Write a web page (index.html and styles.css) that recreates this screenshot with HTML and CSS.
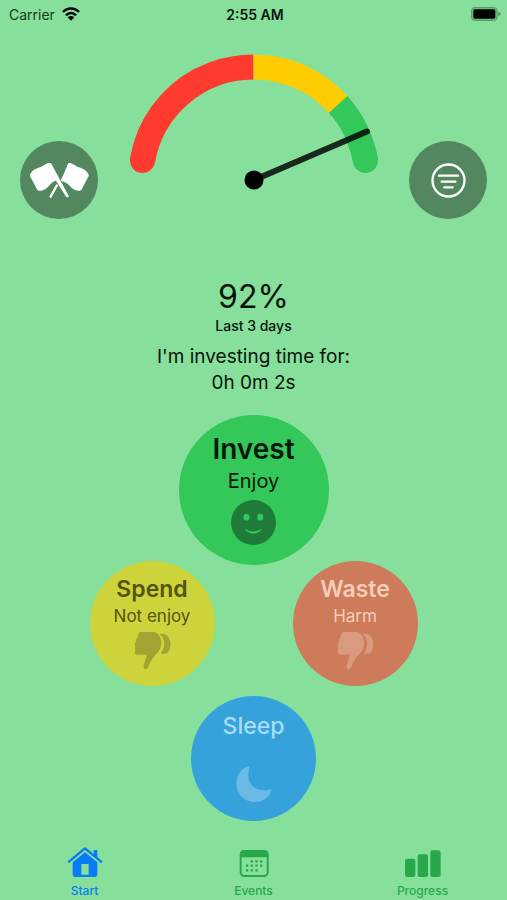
FILE: index.html
```html
<!DOCTYPE html>
<html lang="en">
<head>
<meta charset="utf-8">
<meta name="viewport" content="width=device-width, initial-scale=1">
<title>Start</title>
<link rel="stylesheet" href="styles.css">
</head>
<body>
<header class="status">
  <div class="status-left">
    <span>Carrier</span>
    <svg class="wifi" viewBox="0 0 54 42" aria-hidden="true">
      <g fill="none" stroke="currentColor" stroke-width="7.5">
        <path d="M3 15C16 1 38 1 51 15"/>
        <path d="M12 25C20 16 34 16 42 25"/>
      </g>
      <path d="M17 31Q27 23 37 31L27 41Z" fill="currentColor"/>
    </svg>
  </div>
  <time class="status-time">2:55 AM</time>
  <svg class="battery" viewBox="0 0 90 42" aria-hidden="true">
    <rect x="1.5" y="1.5" width="77" height="39" rx="10" fill="#6db87f" stroke="#58966a" stroke-width="3"/>
    <rect x="7" y="7" width="66" height="28" rx="5"/>
    <path d="M82 14Q90 17 90 21T82 28Z" fill="#58966a"/>
  </svg>
</header>

<main class="main">
  <section class="dial">
    <button class="round" type="button" aria-label="Goals">
      <svg class="flags" viewBox="55 90 190 115" aria-hidden="true">
        <g fill="none" stroke="#fff" stroke-width="7" stroke-linecap="round">
          <path d="M142 164L123 198"/>
        </g>
        <path fill="#fff" d="M178 96C188 94 194 103 207 108C218 113 230 114 238 131C240 136 236 140 233 145L217 176C214 181 208 180 202 179C190 177 184 168 174 159C168 154 160 154 155 150C154 147 156 143 158 140L173 105C174 101 175 98 178 96Z"/>
        <path fill="#fff" d="M121 96C111 94 105 103 93 108C81 113 69 114 61 131C59 136 63 140 66 145L82 176C85 181 91 180 97 179C109 177 115 168 124 159C130 154 135 151 139 150L170 198Q177 202 178 196L127 101Q125 97 121 96Z"/>
      </svg>
    </button>
    <svg class="gauge" viewBox="129 54 250 137" role="img" aria-label="92 percent">
      <g fill="none" stroke-width="25">
        <path stroke="#ff3b30" stroke-linecap="round" d="M142.500 160.500A113 113 0 0 1 200 80"/>
        <path stroke="#ff3b30" d="M142.500 160.500A113 113 0 0 1 253.500 67"/>
        <path stroke="#34c759" stroke-linecap="round" d="M365.500 160.500A113 113 0 0 0 358 136"/>
        <path stroke="#34c759" d="M365.500 160.500A113 113 0 0 0 338 104.400"/>
        <path stroke="#fc0" d="M253.500 67A113 113 0 0 1 338 104.400"/>
      </g>
      <path d="M254 180L367 131.500" stroke="#000" stroke-opacity=".82" stroke-width="6" stroke-linecap="round"/>
      <circle cx="254" cy="180" r="9.500"/>
    </svg>
    <button class="round" type="button" aria-label="Filter">
      <svg class="filter" viewBox="0 0 105 105" fill="none" stroke="#fff" aria-hidden="true">
        <circle cx="52.500" cy="52.500" r="48" stroke-width="7"/>
        <path stroke-width="7" stroke-linecap="round" d="M24 38H81M32 56H73M40 73H65"/>
      </svg>
    </button>
  </section>

  <section class="summary">
    <p class="percent">92%</p>
    <p class="period">Last 3 days</p>
    <p class="timer">I'm investing time for:<br>0h 0m 2s</p>
  </section>

  <section class="modes">
    <button class="mode invest" type="button">
      <span class="name">Invest</span>
      <span class="note">Enjoy</span>
      <svg class="face" viewBox="0 0 134 134" aria-hidden="true">
        <circle cx="67" cy="67" r="67" fill="#1f7c38"/>
        <g fill="#34c759"><ellipse cx="46" cy="51" rx="9" ry="10"/><ellipse cx="87" cy="51" rx="9" ry="10"/>
        <path d="M43 86Q67 101 90 86Q92 88 89 91Q67 110 44 91Q41 88 43 86Z"/></g>
      </svg>
    </button>
    <div class="pair">
      <button class="mode spend" type="button">
        <span class="name">Spend</span>
        <span class="note">Not enjoy</span>
        <svg class="thumb" viewBox="0 0 112 116" aria-hidden="true">
          <path d="M13 10Q13 3 22 2H58Q69 2 77 14Q84 25 82 41Q80 57 66 70Q57 79 50 92L43 109Q39 116 33 115Q28 113 29 105L39 71H13Q1 71 2 62L4 57Q0 52 4 44Q1 37 6 31Q4 24 9 20Z"/>
          <path d="M79 7H88Q100 8 107 23Q113 37 108 54Q104 66 94 68H84Q80 68 84 62Q94 46 91 31Q89 17 79 9Q77 7 79 7Z"/>
        </svg>
      </button>
      <button class="mode waste" type="button">
        <span class="name">Waste</span>
        <span class="note">Harm</span>
        <svg class="thumb" viewBox="0 0 112 116" aria-hidden="true">
          <path d="M13 10Q13 3 22 2H58Q69 2 77 14Q84 25 82 41Q80 57 66 70Q57 79 50 92L43 109Q39 116 33 115Q28 113 29 105L39 71H13Q1 71 2 62L4 57Q0 52 4 44Q1 37 6 31Q4 24 9 20Z"/>
          <path d="M79 7H88Q100 8 107 23Q113 37 108 54Q104 66 94 68H84Q80 68 84 62Q94 46 91 31Q89 17 79 9Q77 7 79 7Z"/>
        </svg>
      </button>
    </div>
    <button class="mode sleep" type="button">
      <span class="name">Sleep</span>
      <svg class="moon" viewBox="0 0 110 114" aria-hidden="true">
        <path d="M39 2Q41 2 41 5C35 27 37 46 48 60C61 76 81 79 105 74Q109 73 109 77C101 100 79 113 57 112C25 112 1 88 1 57C1 32 15 9 39 2Z"/>
      </svg>
    </button>
  </section>
</main>

<nav class="tabs" aria-label="Main">
  <a class="tab active" href="#start" aria-current="page">
    <svg class="tab-icon" viewBox="0 0 108 96" aria-hidden="true">
      <path fill="none" stroke="currentColor" stroke-width="7" stroke-linecap="round" stroke-linejoin="round" d="M6 47L54 7L102 47"/>
      <path fill="currentColor" fill-rule="evenodd" d="M54 19L91 49V83Q91 93 81 93H27Q17 93 17 83V49ZM43 54V86H65V54Z"/>
      <path fill="currentColor" d="M80 14Q80 12 82 12H89Q91 12 91 14V36L80 27Z"/>
    </svg>
    Start
  </a>
  <a class="tab" href="#events">
    <svg class="tab-icon" viewBox="0 0 108 96" aria-hidden="true">
      <rect x="14" y="15" width="81" height="75" rx="11" fill="none" stroke="currentColor" stroke-width="6"/>
      <path fill="currentColor" d="M12 34V25Q12 13 24 13H85Q97 13 97 25V34Z"/>
      <path stroke="currentColor" stroke-width="7" stroke-dasharray="7 7" d="M44 46H80M30 59H80M30 73H65"/>
    </svg>
    Events
  </a>
  <a class="tab" href="#progress">
    <svg class="tab-icon" viewBox="0 0 108 96" aria-hidden="true">
      <g fill="currentColor"><rect x="0" y="38" width="31" height="55" rx="7"/><rect x="38" y="25" width="31" height="68" rx="7"/><rect x="76" y="13" width="31" height="80" rx="7"/></g>
    </svg>
    Progress
  </a>
</nav>
</body>
</html>
```
FILE: styles.css
```css
* { box-sizing: border-box; }

body {
  display: flex;
  flex-direction: column;
  min-height: 100vh;
  margin: 0;
  background: #86df9b;
  color: #06140a;
  font-family: Inter, "Liberation Sans", sans-serif;
}

p { margin: 0; }
svg { display: block; flex: none; }

button {
  padding: 0;
  border: 0;
  color: inherit;
  font: inherit;
  cursor: pointer;
}

.status {
  display: grid;
  grid-template-columns: 1fr auto 1fr;
  align-items: center;
  height: 28px;
  padding: 0 6px 0 9px;
  font-size: 14px;
}
.status-left { display: flex; align-items: center; gap: 7px; color: #173820; }
.wifi { width: 18px; height: 14px; color: #000; }
.status-time { font-weight: 600; }
.battery { width: 30px; height: 14px; justify-self: end; }

.dial {
  display: flex;
  justify-content: space-between;
  align-items: flex-end;
  padding: 26px 20px 0;
}
.gauge { width: 250px; height: 137px; margin-bottom: 28px; }
.round {
  display: grid;
  place-items: center;
  flex: none;
  width: 78px;
  height: 78px;
  border-radius: 50%;
  background: #52875f;
}
.flags { width: 63px; height: 38px; }
.filter { width: 35px; height: 35px; }

.summary { padding-top: 57px; text-align: center; }
.percent { font-size: 32px; line-height: 41px; }
.period { font-size: 14px; line-height: 18px; font-weight: 500; }
.timer { padding-top: 9px; font-size: 19px; line-height: 26px; }

.modes {
  display: flex;
  flex-direction: column;
  align-items: center;
  padding-top: 19px;
}
.mode {
  display: flex;
  flex-direction: column;
  align-items: center;
  width: 125px;
  height: 125px;
  padding-top: 12px;
  border-radius: 50%;
}
.name { font-size: 23px; line-height: 32px; font-weight: 600; }
.note { font-size: 17px; line-height: 22px; }

.invest { width: 150px; height: 150px; padding-top: 16px; background: #34c759; color: #04180a; }
.invest .name { font-size: 28px; line-height: 36px; }
.invest .note { font-size: 20px; line-height: 28px; }
.face { width: 45px; height: 45px; margin-top: 5px; }

.pair { display: flex; gap: 78px; margin-top: -4px; }
.spend { background: #cdd33b; color: #54540f; }
.waste { background: #cd7b5b; color: #f7cdb9; }
.thumb { width: 37px; height: 39px; margin-top: 4px; }
.spend .thumb { fill: #a1a432; }
.waste .thumb { fill: #da9a7f; }

.sleep { margin-top: 10px; padding-top: 14px; background: #36a2db; color: #a9dcf8; }
.sleep .name { font-weight: 500; }
.moon { width: 36px; height: 38px; margin-top: 23px; fill: #6abae5; }

.tabs { display: grid; grid-template-columns: repeat(3, 1fr); margin-top: auto; }
.tab {
  display: flex;
  flex-direction: column;
  align-items: center;
  gap: 5px;
  padding-bottom: 1px;
  color: #28a84a;
  font-size: 12px;
  line-height: 16px;
  font-weight: 500;
  text-decoration: none;
}
.active { color: #087cf5; }
.tab-icon { width: 36px; height: 32px; }
```
